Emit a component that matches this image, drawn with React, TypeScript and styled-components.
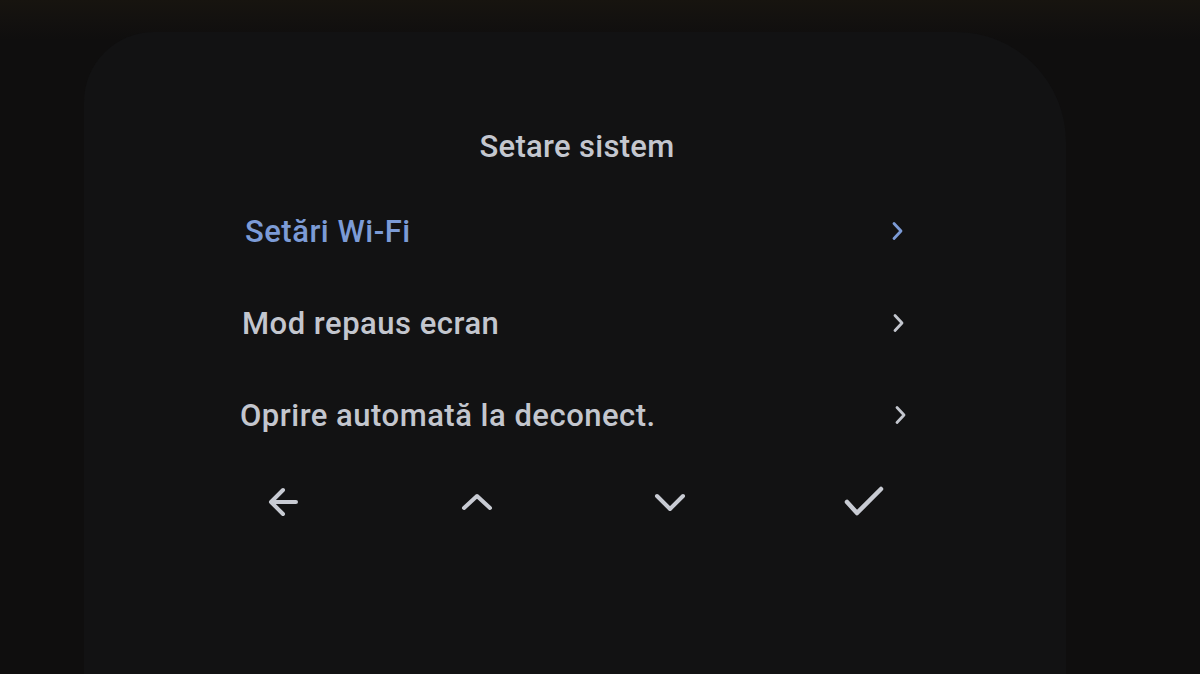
import styled, { createGlobalStyle } from "styled-components";

const GlobalStyle = createGlobalStyle`
  html, body {
    margin: 0;
    padding: 0;
    background: #0f0e0e;
  }
  body {
    font-family: Roboto, "Noto Sans", "Liberation Sans", sans-serif;
  }
`;

const Page = styled.div`
  width: 1200px;
  height: 674px;
  overflow: hidden;
  background: linear-gradient(180deg, #17140f 0px, #13110f 20px, #0f0e0e 40px, #0f0e0e 100%);
  padding: 32px 134px 0 84px;
  box-sizing: border-box;
`;

const Screen = styled.div`
  height: 700px;
  background: #121213;
  border-radius: 70px 110px 0 0;
  padding-top: 95px;
  box-sizing: border-box;
`;

const Menu = styled.div`
  margin-left: 156px;
  width: 674px;
  display: flex;
  flex-direction: column;
`;

const Title = styled.h1`
  margin: 0 0 18px;
  height: 40px;
  line-height: 40px;
  text-align: center;
  font-size: 31px;
  font-weight: 500;
  letter-spacing: 0.3px;
  color: #c4c7cf;
`;

const Row = styled.div<{ $active?: boolean; $indent: number; $inset: number }>`
  height: 92px;
  display: flex;
  align-items: center;
  justify-content: space-between;
  padding-left: ${(p) => p.$indent}px;
  padding-right: ${(p) => p.$inset}px;
  color: ${(p) => (p.$active ? "#7c9bd6" : "#c3c6ce")};
`;

const Label = styled.span`
  font-size: 31px;
  font-weight: 500;
  letter-spacing: 0.5px;
`;

const Chevron = styled.svg`
  width: 14px;
  height: 20px;
`;

const Controls = styled.div`
  margin-top: 21px;
  height: 40px;
  display: grid;
  grid-template-columns: repeat(4, 193px);
  margin-left: -52px;
  color: #c8cbd3;
`;

const Control = styled.div`
  display: flex;
  align-items: center;
  justify-content: center;
`;

const Icon = styled.svg`
  width: 40px;
  height: 40px;
`;

const items = [
  { label: "Setări Wi-Fi", active: true, indent: 5, inset: 10 },
  { label: "Mod repaus ecran", active: false, indent: 2, inset: 9 },
  { label: "Oprire automată la deconect.", active: false, indent: 0, inset: 7 },
];

const App = () => (
  <>
    <GlobalStyle />
    <Page>
      <Screen>
        <Menu>
          <Title>Setare sistem</Title>
          {items.map((item) => (
            <Row key={item.label} $active={item.active} $indent={item.indent} $inset={item.inset}>
              <Label>{item.label}</Label>
              <Chevron viewBox="0 0 14 20" fill="none" stroke="currentColor" strokeWidth="2.8" strokeLinecap="round" strokeLinejoin="round">
                <path d="M4 2.5 L11 10 L4 17.5" />
              </Chevron>
            </Row>
          ))}
          <Controls>
            <Control>
              <Icon viewBox="0 0 40 40" fill="none" stroke="currentColor" strokeWidth="4" strokeLinecap="round" strokeLinejoin="round">
                <path d="M31 20 H6 M18 8 L6 20 L18 32" />
              </Icon>
            </Control>
            <Control>
              <Icon viewBox="0 0 40 40" fill="none" stroke="currentColor" strokeWidth="4" strokeLinecap="round" strokeLinejoin="round">
                <path d="M6 26 L19 14 L32 26" />
              </Icon>
            </Control>
            <Control>
              <Icon viewBox="0 0 40 40" fill="none" stroke="currentColor" strokeWidth="4" strokeLinecap="round" strokeLinejoin="round">
                <path d="M6 14 L19 27 L32 14" />
              </Icon>
            </Control>
            <Control>
              <Icon viewBox="0 0 40 40" fill="none" stroke="currentColor" strokeWidth="4.5" strokeLinecap="round" strokeLinejoin="round">
                <path d="M3 20 L13 31 L37 7" />
              </Icon>
            </Control>
          </Controls>
        </Menu>
      </Screen>
    </Page>
  </>
);

export default App;
